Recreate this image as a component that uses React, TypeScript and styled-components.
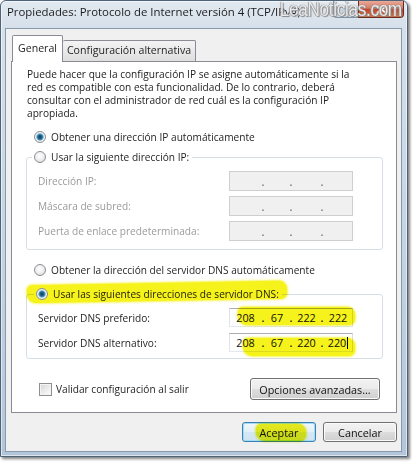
import { Fragment, ReactNode } from "react";
import styled, { createGlobalStyle } from "styled-components";

const FONT = `"Open Sans", "Noto Sans", sans-serif`;
const SEG = [31, 24, 27, 28];

const GlobalStyle = createGlobalStyle`
  html, body {
    margin: 0;
    padding: 0;
    background: #ffffff;
  }
  body {
    font-family: ${FONT};
    color: #1e1e1e;
  }
  #root {
    width: 412px;
    height: 462px;
    overflow: hidden;
  }
`;

export default function App() {
    return <>
        <GlobalStyle/>
        <Window>
            <TitleBar>
                <Title>Propiedades: Protocolo de Internet versión 4 (TCP/IPv4)</Title>
                <CaptionButtons>
                    <HelpButton/>
                    <CloseButton>
                        <svg width="11" height="9" viewBox="0 0 11 9">
                            <path d="M1 1 L10 8 M10 1 L1 8" stroke="#ffffff" strokeWidth="2"/>
                        </svg>
                    </CloseButton>
                </CaptionButtons>
                <Watermark>LeaNoticias.com</Watermark>
            </TitleBar>

            <Client>
                <TabStrip>
                    <Tab $active>General</Tab>
                    <Tab>Configuración alternativa</Tab>
                </TabStrip>

                <Panel>
                    <Description>
                        Puede hacer que la configuración IP se asigne automáticamente si la<br/>
                        red es compatible con esta funcionalidad. De lo contrario, deberá<br/>
                        consultar con el administrador de red cuál es la configuración IP<br/>
                        apropiada.
                    </Description>

                    <OptionRow $top={10}>
                        <Radio $checked/>
                        Obtener una dirección IP automáticamente
                    </OptionRow>

                    <Group $top={6}>
                        <Legend>
                            <Radio/>
                            Usar la siguiente dirección IP:
                        </Legend>
                        <Rows $pt={7} $pb={8} $gap={5}>
                            {ipRows.map((label) => <Fragment key={label}>
                                <FieldLabel $disabled>{label}</FieldLabel>
                                <IpField disabled height={20}/>
                            </Fragment>)}
                        </Rows>
                    </Group>

                    <OptionRow $top={13}>
                        <Radio/>
                        Obtener la dirección del servidor DNS automáticamente
                    </OptionRow>

                    <Group $top={10}>
                        <Legend $marked>
                            <Marker $left={-7} $top={-4} $width={260} $height={18} $tilt={-1}/>
                            <Radio $checked/>
                            Usar las siguientes direcciones de servidor DNS:
                        </Legend>
                        <Rows $pt={7} $pb={6} $gap={6}>
                            <FieldLabel>Servidor DNS preferido:</FieldLabel>
                            <IpField height={19} values={["208", "67", "222", "222"]}
                                     mark={<Marker $left={8} $top={-2} $width={117} $height={18} $tilt={0}/>}/>
                            <FieldLabel>Servidor DNS alternativo:</FieldLabel>
                            <IpField height={19} caret values={["208", "67", "220", "220"]}
                                     mark={<Marker $left={13} $top={4} $width={112} $height={18} $tilt={0}/>}/>
                        </Rows>
                    </Group>

                    <FooterRow>
                        <Check/>
                        <span>Validar configuración al salir</span>
                        <Button $width={130} $height={22} $push>Opciones avanzadas...</Button>
                    </FooterRow>
                </Panel>

                <ButtonRow>
                    <Button $width={74} $height={20} $default>
                        Aceptar
                        <Marker $left={13} $top={1} $width={50} $height={17} $tilt={0}/>
                    </Button>
                    <Button $width={74} $height={20}>Cancelar</Button>
                </ButtonRow>
            </Client>
        </Window>
    </>
}

const ipRows = ["Dirección IP:", "Máscara de subred:", "Puerta de enlace predeterminada:"];

const IpField = ({values, disabled, caret, height, mark}: {
    values?: string[],
    disabled?: boolean,
    caret?: boolean,
    height: number,
    mark?: ReactNode
}) => {
    return <IpBox $disabled={disabled} $height={height}>
        {SEG.map((w, i) => <Fragment key={i}>
            {i > 0 && <IpDot $disabled={disabled}>.</IpDot>}
            <IpPart $width={w}>
                {values?.[i]}
                {caret && i === 3 && <Caret/>}
            </IpPart>
        </Fragment>)}
        {mark}
    </IpBox>
}

const Window = styled.div`
    position: relative;
    box-sizing: border-box;
    width: 408px;
    height: 457px;
    display: flex;
    flex-direction: column;
    border: 1px solid #4e6278;
    border-radius: 6px 6px 0 0;
    background: linear-gradient(180deg, #e2e9f0 0%, #d6e0ea 28px, #c2d2e2 60%, #b3c6d9 100%);
    box-shadow: inset 0 0 0 1px rgba(255, 255, 255, 0.55), 2px 2px 3px rgba(0, 0, 0, 0.5);
`;

const TitleBar = styled.div`
    position: relative;
    height: 27px;
    display: flex;
    align-items: flex-start;
`;

const Title = styled.div`
    padding: 3px 0 0 6px;
    font-size: 11.4px;
    line-height: 16px;
    color: #1c1c1c;
    white-space: nowrap;
`;

const CaptionButtons = styled.div`
    margin-left: auto;
    margin-right: 3px;
    display: flex;
`;

const HelpButton = styled.div`
    width: 25px;
    height: 17px;
    box-sizing: border-box;
    border: 1px solid #7d90a6;
    border-top: none;
    border-right: none;
    border-radius: 0 0 0 4px;
    background: linear-gradient(180deg, #eef2f6 0%, #d7e0e9 50%, #c3d0dd 51%, #cfdbe7 100%);
`;

const CloseButton = styled.div`
    width: 46px;
    height: 17px;
    box-sizing: border-box;
    border: 1px solid #6b2a1e;
    border-top: none;
    border-radius: 0 0 4px 0;
    display: flex;
    align-items: center;
    justify-content: center;
    background: linear-gradient(180deg, #e9a99a 0%, #d47b65 45%, #c2452b 52%, #d5703f 100%);
`;

const Watermark = styled.div`
    position: absolute;
    right: 5px;
    top: -3px;
    font-family: "Liberation Sans", Arial, sans-serif;
    font-size: 20px;
    letter-spacing: -0.4px;
    color: rgba(255, 255, 255, 0.85);
    text-shadow: 0 0 1px #6b6b6b, 1px 1px 1px #8a8a8a, -1px 0 1px #9a9a9a;
    transform: scaleX(0.86);
    transform-origin: right center;
    white-space: nowrap;
`;

const Client = styled.div`
    flex: 1;
    margin: 0 5px 4px 4px;
    padding: 6px 4px 8px 5px;
    display: flex;
    flex-direction: column;
    background: #f0f0f0;
    border: 1px solid #8799ad;
    font-size: 10.15px;
`;

const TabStrip = styled.div`
    position: relative;
    z-index: 1;
    display: flex;
    align-items: flex-end;
    padding-left: 1px;
    margin-bottom: -1px;
`;

const Tab = styled.div<{ $active?: boolean }>`
    box-sizing: border-box;
    width: ${p => p.$active ? 51 : 133}px;
    height: ${p => p.$active ? 27 : 21}px;
    margin-bottom: ${p => p.$active ? 0 : 1}px;
    padding-top: ${p => p.$active ? 5 : 2}px;
    border: 1px solid #898c95;
    border-bottom: none;
    border-left: ${p => p.$active ? '1px solid #898c95' : 'none'};
    border-radius: 2px 2px 0 0;
    text-align: center;
    line-height: 14px;
    font-size: 10.6px;
    background: ${p => p.$active ? '#ffffff' : 'linear-gradient(180deg, #f4f4f4 0%, #e9e9e9 50%, #dedede 100%)'};
`;

const Panel = styled.div`
    display: flex;
    flex-direction: column;
    padding: 6px 13px 12px 14px;
    background: #ffffff;
    border: 1px solid #898c95;
`;

const Description = styled.div`
    margin-left: 1px;
    line-height: 13px;
    white-space: nowrap;
    color: #222222;
`;

const OptionRow = styled.div<{ $top: number }>`
    margin-top: ${p => p.$top}px;
    height: 14px;
    padding-left: 8px;
    display: flex;
    align-items: center;
    gap: 5px;
    white-space: nowrap;
`;

const Radio = styled.span<{ $checked?: boolean }>`
    position: relative;
    box-sizing: border-box;
    flex-shrink: 0;
    width: 12px;
    height: 12px;
    border-radius: 50%;
    border: 1px solid #8c8f94;
    background: ${p => p.$checked
            ? 'radial-gradient(circle, #123f5c 0, #1f6389 2px, #4f9dc4 3px, #a7cde0 3.6px, #f2f2f2 4.2px, #d4d4d4 100%)'
            : 'radial-gradient(circle at 45% 40%, #ffffff 0, #ececec 55%, #c8c8c8 100%)'};
`;

const Group = styled.fieldset<{ $top: number }>`
    margin: ${p => p.$top}px 0 0 0;
    padding: 0;
    min-inline-size: 0;
    border: 1px solid #d5dfe5;
    border-radius: 3px;
`;

const Legend = styled.legend<{ $marked?: boolean }>`
    position: relative;
    margin-left: ${p => p.$marked ? 7 : 5}px;
    padding: 0 3px 0 2px;
    height: 14px;
    display: flex;
    align-items: center;
    gap: 5px;
    white-space: nowrap;
    background: #ffffff;
`;

const Rows = styled.div<{ $pt: number, $pb: number, $gap: number }>`
    display: grid;
    grid-template-columns: 1fr 124px;
    align-items: center;
    row-gap: ${p => p.$gap}px;
    padding: ${p => p.$pt}px 29px ${p => p.$pb}px 11px;
`;

const FieldLabel = styled.span<{ $disabled?: boolean }>`
    white-space: nowrap;
    color: ${p => p.$disabled ? '#9b9b9b' : '#1e1e1e'};
`;

const IpBox = styled.div<{ $disabled?: boolean, $height: number }>`
    position: relative;
    box-sizing: border-box;
    height: ${p => p.$height}px;
    display: flex;
    align-items: center;
    border: 1px solid;
    border-color: ${p => p.$disabled ? '#cfcfcf' : '#abadb3 #dbdfe6 #e3e9ef #e2e3ea'};
    background: ${p => p.$disabled ? '#f0f0f0' : '#ffffff'};
    font-size: 10.8px;
`;

const IpPart = styled.span<{ $width: number }>`
    width: ${p => p.$width}px;
    display: flex;
    align-items: center;
    justify-content: center;
    color: #111111;
`;

const IpDot = styled.span<{ $disabled?: boolean }>`
    width: 4px;
    text-align: center;
    color: ${p => p.$disabled ? '#6f6f6f' : '#111111'};
    font-weight: 600;
`;

const Caret = styled.span`
    width: 1px;
    height: 12px;
    margin-left: 1px;
    background: #000000;
`;

const Marker = styled.span<{ $left: number, $top: number, $width: number, $height: number, $tilt: number }>`
    position: absolute;
    left: ${p => p.$left}px;
    top: ${p => p.$top}px;
    width: ${p => p.$width}px;
    height: ${p => p.$height}px;
    border-radius: 5px 8px 6px 9px;
    background: #f6f21c;
    box-shadow: 0 0 2px 1px rgba(246, 242, 28, 0.75);
    transform: rotate(${p => p.$tilt}deg);
    mix-blend-mode: multiply;
    pointer-events: none;
`;

const FooterRow = styled.div`
    margin-top: 19px;
    padding: 0 3px 0 13px;
    display: flex;
    align-items: center;
    gap: 4px;
    white-space: nowrap;
`;

const Check = styled.span`
    box-sizing: border-box;
    width: 13px;
    height: 13px;
    border: 1px solid #8e8f8f;
    background: linear-gradient(135deg, #d6d6d6 0%, #ececec 55%, #ffffff 100%);
    box-shadow: inset 0 0 0 1px #f4f4f4;
`;

const ButtonRow = styled.div`
    margin-top: 9px;
    display: flex;
    justify-content: flex-end;
    gap: 7px;
`;

const Button = styled.div<{ $width: number, $height: number, $default?: boolean, $push?: boolean }>`
    position: relative;
    box-sizing: border-box;
    width: ${p => p.$width}px;
    height: ${p => p.$height}px;
    margin-left: ${p => p.$push ? 'auto' : '0'};
    display: flex;
    align-items: center;
    justify-content: center;
    border: 1px solid ${p => p.$default ? '#3c7fb1' : '#707070'};
    border-radius: 3px;
    font-size: 10.8px;
    color: #111111;
    background: ${p => p.$default
            ? 'linear-gradient(180deg, #f0f7fb 0%, #e2eff7 50%, #d4e8f4 51%, #cfe3f0 100%)'
            : 'linear-gradient(180deg, #f2f2f2 0%, #ebebeb 50%, #dddddd 51%, #cfcfcf 100%)'};
    box-shadow: inset 0 0 0 1px ${p => p.$default ? '#9fdcf7' : '#fbfbfb'};
`;
